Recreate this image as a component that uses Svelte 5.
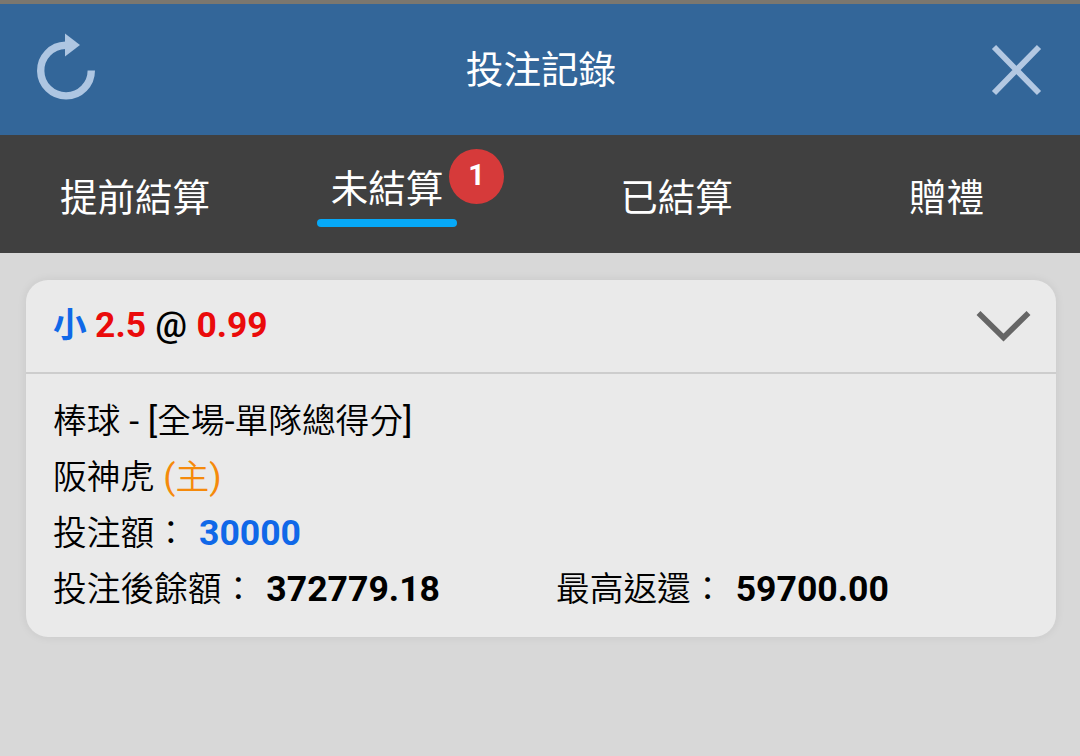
<script lang="ts">
  type Tab = { id: string; label: string; count?: number };

  const tabs: Tab[] = [
    { id: 'early', label: '提前結算' },
    { id: 'open', label: '未結算', count: 1 },
    { id: 'settled', label: '已結算' },
    { id: 'gift', label: '贈禮' }
  ];

  const bet = {
    pick: '小',
    line: '2.5',
    odds: '0.99',
    market: '棒球 - [全場-單隊總得分]',
    team: '阪神虎',
    side: '(主)',
    stake: '30000',
    balance: '372779.18',
    payout: '59700.00'
  };

  let active = $state('open');
  let expanded = $state(true);

  // latin punctuation is set a bit larger and heavier than the CJK glyphs
  function segments(text: string) {
    return text.split(/([ -~]+)/).filter((s) => s.length > 0);
  }
</script>

{#snippet mixed(text: string)}
  {#each segments(text) as part}<span class:latin={/^[ -~]/.test(part)}>{part}</span>{/each}
{/snippet}

<div class="page">
  <header class="topbar">
    <button class="icon-btn" aria-label="refresh">
      <svg width="60" height="68" viewBox="0 0 60 68">
        <path d="M29.5 9.3 A25.3 25.3 0 1 0 55.3 34.5" fill="none" stroke="#aec6e2" stroke-width="7.4" />
        <path d="M29 -2.5 L44 9 L29 20.5 Z" fill="#aec6e2" />
      </svg>
    </button>
    <h1>投注記錄</h1>
    <button class="icon-btn" aria-label="close">
      <svg width="50" height="50" viewBox="0 0 50 50">
        <path d="M2 2 L47 48 M47 2 L2 48" fill="none" stroke="#b3c8e2" stroke-width="5.8" />
      </svg>
    </button>
  </header>

  <nav class="tabs">
    {#each tabs as tab}
      <button class="tab {tab.id}" class:active={active === tab.id} onclick={() => (active = tab.id)}>
        <span class="label">{tab.label}</span>
        {#if tab.count}
          <span class="badge">{tab.count}</span>
        {/if}
      </button>
    {/each}
  </nav>

  <main>
    <section class="card">
      <button class="card-head" onclick={() => (expanded = !expanded)}>
        <span class="selection">
          <span class="pick">{bet.pick}</span>
          <span class="red">{bet.line}</span>
          <span class="at">@</span>
          <span class="red">{bet.odds}</span>
        </span>
        <svg width="54" height="34" viewBox="0 0 54 34">
          <path d="M2.5 4 L27.5 28.5 L52.5 4" fill="none" stroke="#666" stroke-width="5.6" />
        </svg>
      </button>
      {#if expanded}
        <div class="card-body">
          <div class="row">{@render mixed(bet.market)}</div>
          <div class="row">{bet.team} <span class="home">{@render mixed(bet.side)}</span></div>
          <div class="row">投注額： <b class="stake">{bet.stake}</b></div>
          <div class="row split">
            <span>投注後餘額： <b>{bet.balance}</b></span>
            <span>最高返還： <b>{bet.payout}</b></span>
          </div>
        </div>
      {/if}
    </section>
  </main>
</div>

<style>
  :global(body) {
    margin: 0;
    background: #d8d8d8;
  }
  .page {
    box-sizing: border-box;
    height: 756px;
    border-top: 4px solid #7b776f;
    background: #d8d8d8;
    font-family: Roboto, "Noto Sans CJK TC", sans-serif;
    overflow: hidden;
  }
  button {
    border: none;
    background: none;
    padding: 0;
    color: inherit;
    font: inherit;
    cursor: pointer;
  }
  svg {
    display: block;
    overflow: visible;
  }

  .topbar {
    display: grid;
    grid-template-columns: 60px 1fr 50px;
    align-items: center;
    box-sizing: border-box;
    height: 131px;
    padding: 0 38px 0 36px;
    background: #336699;
    color: #fff;
  }
  h1 {
    margin: 0;
    padding: 0 6px 6px 0;
    font-size: 37.6px;
    font-weight: 400;
    text-align: center;
  }

  .tabs {
    display: grid;
    grid-template-columns: 270px 270px 273px 267px;
    height: 118px;
    background: #404040;
    color: #fff;
    font-size: 37.5px;
    font-weight: 400;
  }
  .tab {
    position: relative;
    display: flex;
    align-items: center;
    justify-content: center;
  }
  .label {
    line-height: 57px;
    margin-top: 9px;
  }
  .active .label {
    box-sizing: border-box;
    width: 140px;
    height: 66px;
    margin-top: 1px;
    margin-right: 36px;
    line-height: 55px;
  }
  .active .label::after {
    content: '';
    display: block;
    height: 8px;
    margin-top: 2px;
    border-radius: 4px;
    background: #06a9f8;
  }
  .badge {
    position: absolute;
    top: 14px;
    left: 179px;
    width: 55px;
    height: 55px;
    border-radius: 50%;
    background: #d63a3a;
    font-size: 29px;
    font-weight: 700;
    line-height: 52px;
    text-align: center;
  }

  main {
    padding: 27px 24px 0 26px;
  }
  .card {
    border-radius: 22px;
    background: #eaeaea;
    box-shadow: 0 0 10px rgba(0, 0, 0, .08);
    color: #000;
    font-size: 33.7px;
    font-weight: 350;
  }
  .card-head {
    display: flex;
    align-items: center;
    justify-content: space-between;
    box-sizing: border-box;
    width: 100%;
    height: 94px;
    padding: 0 26px 0 27px;
    border-bottom: 2px solid #cdcdcd;
  }
  .selection {
    padding-bottom: 8px;
    font-weight: 500;
  }
  .at {
    margin: 0 1px;
    font-size: 35.4px;
    font-weight: 500;
  }
  .red {
    color: #ea0b0b;
    font-size: 35.4px;
    font-weight: 700;
  }
  .card-body {
    padding: 20px 27px 19px;
  }
  .row {
    height: 56px;
    line-height: 56px;
    white-space: nowrap;
  }
  .split {
    display: grid;
    grid-template-columns: 503px 1fr;
  }
  .latin {
    font-size: 35.6px;
    font-weight: 400;
    line-height: 1;
    white-space: pre;
  }
  .home {
    margin-left: 1px;
    color: #f58a0b;
  }
  b {
    margin-left: 3px;
    font-size: 35.6px;
    font-weight: 700;
    line-height: 1;
  }
  .pick,
  .stake {
    color: #1068e8;
  }
  .pick {
    font-weight: 700;
  }
</style>
